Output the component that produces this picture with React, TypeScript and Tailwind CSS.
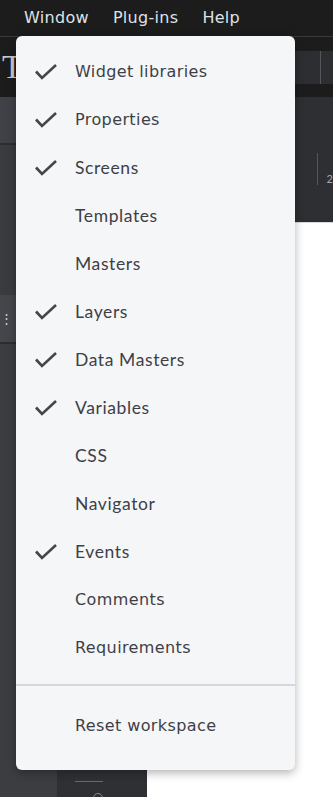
type Item = { label: string; checked: boolean; wide?: boolean };

const items: Item[] = [
  { label: 'Widget libraries', checked: true, wide: true },
  { label: 'Properties', checked: true, wide: true },
  { label: 'Screens', checked: true },
  { label: 'Templates', checked: false },
  { label: 'Masters', checked: false },
  { label: 'Layers', checked: true },
  { label: 'Data Masters', checked: true },
  { label: 'Variables', checked: true },
  { label: 'CSS', checked: false },
  { label: 'Navigator', checked: false },
  { label: 'Events', checked: true },
  { label: 'Comments', checked: false, wide: true },
  { label: 'Requirements', checked: false, wide: true },
];

function CheckMark() {
  return (
    <svg width="22" height="16" viewBox="0 0 22 16" className="shrink-0">
      <path d="M1 7.5 L7 14 L21 1" fill="none" stroke="#454649" strokeWidth="2.6" />
    </svg>
  );
}

function MenuItem({ item }: { item: Item }) {
  return (
    <div className="flex h-12 items-center">
      <div className="flex w-[59px] justify-end pr-[18px]">{item.checked && <CheckMark />}</div>
      <span
        className={
          item.wide
            ? "font-['DejaVu_Sans',sans-serif] text-[16px] tracking-[0.4px] text-[#3d4047]"
            : "font-['Lato',sans-serif] text-[17.5px] tracking-[0.6px] text-[#3d4047]"
        }
      >
        {item.label}
      </span>
    </div>
  );
}

export default function App() {
  return (
    <div className="relative h-[797px] w-[333px] overflow-hidden bg-white font-['Lato',sans-serif]">
      {/* menubar */}
      <div className="flex h-9 items-center gap-[24px] bg-[#1c1c1c] pl-6 font-['DejaVu_Sans',sans-serif] text-[16px] tracking-[0.3px] text-[#dde2e8]">
        <span>Window</span>
        <span>Plug-ins</span>
        <span>Help</span>
      </div>
      <div className="h-px bg-[#3a3a3a]" />

      {/* toolbar */}
      <div className="flex h-[60px] bg-[#1c1c1c]">
        <div className="flex w-[295px] items-center pl-[2px] font-['Liberation_Serif',serif] text-[34px] leading-none text-[#c9c9c9]">
          T
        </div>
        <div className="flex flex-1 flex-col pt-[14px]">
          <div className="flex h-[33px] bg-[#2d2e32] pl-[25px]">
            <div className="h-full w-px bg-[#55565b]" />
          </div>
        </div>
      </div>

      {/* body */}
      <div className="flex h-[700px]">
        <div className="flex w-[58px] flex-col bg-[#3e3f44]">
          <div className="h-[46px] bg-[#404146]" />
          <div className="h-[2px] bg-[#2c2d31]" />
          <div className="h-[150px] bg-[#3a3b3f]" />
          <div className="flex h-[47px] items-center bg-[#45464b] text-[13px] text-[#cfd1d5]">⋮</div>
          <div className="h-[2px] bg-[#2c2d31]" />
          <div className="flex-1 bg-[#3c3d41]" />
        </div>
        <div className="flex w-[92px] flex-col items-start justify-end bg-[#2f3034] pl-[18px]">
          <div className="mb-[11px] h-px w-[28px] bg-[#6a6b70]" />
          <div className="-mb-[6px] ml-[18px] h-[10px] w-[10px] rounded-full border border-[#8a8b90]" />
        </div>
        <div className="flex flex-1 flex-col">
          <div className="flex h-[125px] bg-[#2e2f33] pl-[170px] pt-[56px]">
            <div className="h-[32px] w-px bg-[#55565b]" />
            <span className="ml-[9px] mt-[18px] text-[11px] text-[#aaa]">2</span>
          </div>
          <div className="h-px bg-[#d9d9d9]" />
          <div className="flex-1 bg-white" />
        </div>
      </div>

      {/* Window dropdown */}
      <div className="absolute left-4 top-9 w-[279px] rounded-md bg-[#f5f6f8] shadow-[0_3px_10px_rgba(0,0,0,0.3)]">
        <div className="pb-3 pt-3">
          {items.map((item) => (
            <MenuItem key={item.label} item={item} />
          ))}
        </div>
        <div className="h-[2px] bg-[#d6d7da]" />
        <div className="pb-[20px] pt-[16px]">
          <MenuItem item={{ label: 'Reset workspace', checked: false, wide: true }} />
        </div>
      </div>
    </div>
  );
}
